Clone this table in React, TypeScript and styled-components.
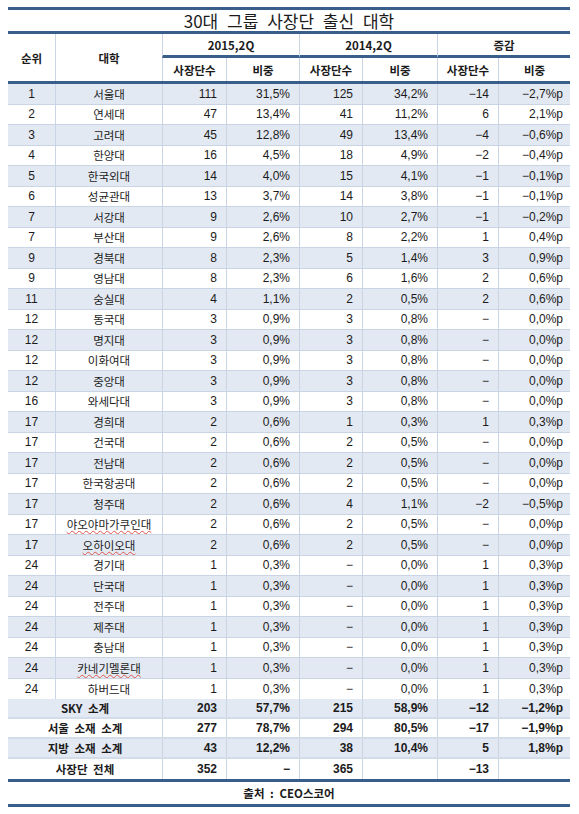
import React from "react";
import styled, { createGlobalStyle, css } from "styled-components";

const NAVY = "#3a5e8a";
const GRID = "#c9d5e4";
const SHADE = "#e3e9f2";
const COLS = "47px 107px 64px 73px 63px 75px 61px 72px";

const GlobalStyle = createGlobalStyle`
    html, body {
        margin: 0;
        padding: 0;
        background: #ffffff;
    }
    body {
        font-family: "Liberation Sans", "Noto Sans CJK KR", sans-serif;
        font-size: 12px;
        color: #1b1b1b;
    }
`;

const Page = styled.div`
    padding: 7px 0 0 8px;
`;

const Sheet = styled.div`
    width: 562px;
    border-top: 3px solid ${NAVY};
    border-bottom: 3px solid ${NAVY};
`;

const Title = styled.div`
    height: 21px;
    display: flex;
    align-items: center;
    justify-content: center;
    font-family: "Noto Sans CJK KR", sans-serif;
    font-size: 17px;
    word-spacing: 5px;
    border-bottom: 3px solid ${NAVY};
`;

const Header = styled.div`
    display: grid;
    grid-template-columns: ${COLS};
    grid-template-rows: 24px 23px;
    border-bottom: 3px solid ${NAVY};
    font-family: "Noto Sans CJK KR", sans-serif;
    font-weight: 700;
    font-size: 11.5px;
`;

const HeadCell = styled.div<{ $rows?: number; $cols?: number; $first?: boolean; $group?: boolean }>`
    display: flex;
    align-items: center;
    justify-content: center;
    grid-row: span ${(p) => p.$rows ?? 1};
    grid-column: span ${(p) => p.$cols ?? 1};
    border-left: ${(p) => (p.$first ? "none" : `1px solid ${GRID}`)};
    ${(p) =>
        p.$group &&
        css`
            border-bottom: 3px solid ${NAVY};
        `}
`;

const Row = styled.div<{ $shaded: boolean; $bold?: boolean; $h: number; $line: number }>`
    display: grid;
    grid-template-columns: ${COLS};
    height: ${(p) => p.$h}px;
    box-sizing: border-box;
    background: ${(p) => (p.$shaded ? SHADE : "#ffffff")};
    border-bottom: ${(p) => p.$line}px solid ${(p) => (p.$line > 1 ? "#d3dce9" : GRID)};
    font-weight: ${(p) => (p.$bold ? 700 : 400)};
    &:last-child {
        border-bottom: none;
    }
`;

const Cell = styled.div<{ $align?: "center" | "right"; $span?: number; $first?: boolean; $pad?: number }>`
    display: flex;
    align-items: center;
    justify-content: ${(p) => (p.$align === "right" ? "flex-end" : "center")};
    grid-column: span ${(p) => p.$span ?? 1};
    padding-right: ${(p) => (p.$align === "right" ? p.$pad ?? 9 : 0)}px;
    border-left: ${(p) => (p.$first ? "none" : `1px solid ${GRID}`)};
    white-space: nowrap;
    overflow: hidden;
`;

const Name = styled.span<{ $typo?: boolean }>`
    font-family: "Noto Sans CJK KR", sans-serif;
    font-size: 11.5px;
    ${(p) =>
        p.$typo &&
        css`
            text-decoration: underline wavy #e0554a;
            text-decoration-thickness: 1px;
            text-underline-offset: 1px;
        `}
`;

const Label = styled.span`
    font-family: "Noto Sans CJK KR", sans-serif;
    font-size: 11.5px;
    word-spacing: 3px;
`;

const Source = styled.div`
    height: 22px;
    border-top: 3px solid ${NAVY};
    display: flex;
    align-items: center;
    justify-content: center;
    font-family: "Noto Sans CJK KR", sans-serif;
    font-size: 11.5px;
    font-weight: 700;
    word-spacing: 3px;
`;

type Line = [string, string, string, string, string, string, string, string];

const rows: Line[] = [
    ["1", "서울대", "111", "31,5%", "125", "34,2%", "−14", "−2,7%p"],
    ["2", "연세대", "47", "13,4%", "41", "11,2%", "6", "2,1%p"],
    ["3", "고려대", "45", "12,8%", "49", "13,4%", "−4", "−0,6%p"],
    ["4", "한양대", "16", "4,5%", "18", "4,9%", "−2", "−0,4%p"],
    ["5", "한국외대", "14", "4,0%", "15", "4,1%", "−1", "−0,1%p"],
    ["6", "성균관대", "13", "3,7%", "14", "3,8%", "−1", "−0,1%p"],
    ["7", "서강대", "9", "2,6%", "10", "2,7%", "−1", "−0,2%p"],
    ["7", "부산대", "9", "2,6%", "8", "2,2%", "1", "0,4%p"],
    ["9", "경북대", "8", "2,3%", "5", "1,4%", "3", "0,9%p"],
    ["9", "영남대", "8", "2,3%", "6", "1,6%", "2", "0,6%p"],
    ["11", "숭실대", "4", "1,1%", "2", "0,5%", "2", "0,6%p"],
    ["12", "동국대", "3", "0,9%", "3", "0,8%", "−", "0,0%p"],
    ["12", "명지대", "3", "0,9%", "3", "0,8%", "−", "0,0%p"],
    ["12", "이화여대", "3", "0,9%", "3", "0,8%", "−", "0,0%p"],
    ["12", "중앙대", "3", "0,9%", "3", "0,8%", "−", "0,0%p"],
    ["16", "와세다대", "3", "0,9%", "3", "0,8%", "−", "0,0%p"],
    ["17", "경희대", "2", "0,6%", "1", "0,3%", "1", "0,3%p"],
    ["17", "건국대", "2", "0,6%", "2", "0,5%", "−", "0,0%p"],
    ["17", "전남대", "2", "0,6%", "2", "0,5%", "−", "0,0%p"],
    ["17", "한국항공대", "2", "0,6%", "2", "0,5%", "−", "0,0%p"],
    ["17", "청주대", "2", "0,6%", "4", "1,1%", "−2", "−0,5%p"],
    ["17", "야오야마가쿠인대", "2", "0,6%", "2", "0,5%", "−", "0,0%p"],
    ["17", "오하이오대", "2", "0,6%", "2", "0,5%", "−", "0,0%p"],
    ["24", "경기대", "1", "0,3%", "−", "0,0%", "1", "0,3%p"],
    ["24", "단국대", "1", "0,3%", "−", "0,0%", "1", "0,3%p"],
    ["24", "전주대", "1", "0,3%", "−", "0,0%", "1", "0,3%p"],
    ["24", "제주대", "1", "0,3%", "−", "0,0%", "1", "0,3%p"],
    ["24", "충남대", "1", "0,3%", "−", "0,0%", "1", "0,3%p"],
    ["24", "카네기멜론대", "1", "0,3%", "−", "0,0%", "1", "0,3%p"],
    ["24", "하버드대", "1", "0,3%", "−", "0,0%", "1", "0,3%p"],
];

// names the spell checker underlined in the original sheet
const typos = new Set(["야오야마가쿠인대", "오하이오대", "카네기멜론대"]);

const totals: [string, string, string, string, string, string, string][] = [
    ["SKY 소계", "203", "57,7%", "215", "58,9%", "−12", "−1,2%p"],
    ["서울 소재 소계", "277", "78,7%", "294", "80,5%", "−17", "−1,9%p"],
    ["지방 소재 소계", "43", "12,2%", "38", "10,4%", "5", "1,8%p"],
    ["사장단 전체", "352", "−", "365", "", "−13", ""],
];

const App: React.FC = () => {
    return (
        <Page>
            <GlobalStyle />
            <Sheet>
                <Title>30대 그룹 사장단 출신 대학</Title>
                <Header>
                    <HeadCell $rows={2} $first>
                        순위
                    </HeadCell>
                    <HeadCell $rows={2}>대학</HeadCell>
                    <HeadCell $cols={2} $group>
                        2015,2Q
                    </HeadCell>
                    <HeadCell $cols={2} $group>
                        2014,2Q
                    </HeadCell>
                    <HeadCell $cols={2} $group>
                        증감
                    </HeadCell>
                    <HeadCell>사장단수</HeadCell>
                    <HeadCell>비중</HeadCell>
                    <HeadCell>사장단수</HeadCell>
                    <HeadCell>비중</HeadCell>
                    <HeadCell>사장단수</HeadCell>
                    <HeadCell>비중</HeadCell>
                </Header>
                <div>
                    {rows.map((r, i) => (
                        <Row key={r[1]} $shaded={i % 2 === 0} $h={20.5} $line={1}>
                            <Cell $first>{r[0]}</Cell>
                            <Cell>
                                <Name $typo={typos.has(r[1])}>{r[1]}</Name>
                            </Cell>
                            {r.slice(2).map((v, j) => (
                                <Cell key={j} $align="right" $pad={j === 5 ? 7 : 9}>
                                    {v}
                                </Cell>
                            ))}
                        </Row>
                    ))}
                </div>
                <div>
                    {totals.map((t, i) => (
                        <Row key={t[0]} $shaded={i % 2 === 0} $bold $h={20} $line={2}>
                            <Cell $span={2} $first>
                                <Label>{t[0]}</Label>
                            </Cell>
                            {t.slice(1).map((v, j) => (
                                <Cell key={j} $align="right" $pad={j === 5 ? 7 : 9}>
                                    {v}
                                </Cell>
                            ))}
                        </Row>
                    ))}
                </div>
                <Source>출처 : CEO스코어</Source>
            </Sheet>
        </Page>
    );
};

export default App;
